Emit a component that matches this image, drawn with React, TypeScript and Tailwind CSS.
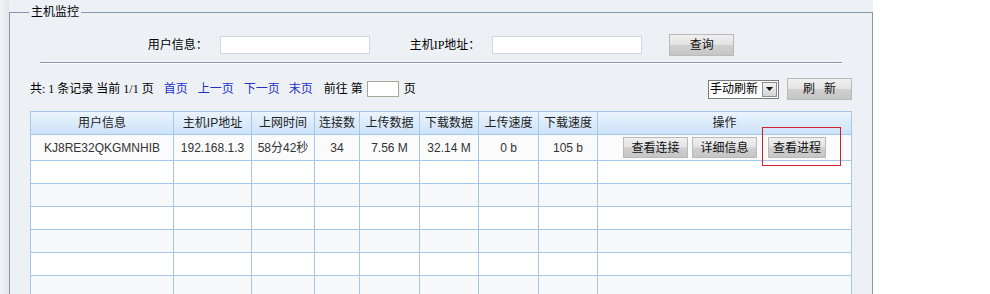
import React from 'react';

const serif = "font-['Liberation_Serif','Noto_Sans_CJK_SC',serif]";
const sans = "font-['Liberation_Sans','Noto_Sans_CJK_SC',sans-serif]";

const btn =
  'border border-[#b9b9b9] bg-[linear-gradient(#f0f0f0,#e3e3e3_48%,#cfcfcf_52%,#c6c6c6)] text-[12px] text-[#111] leading-none';

interface Row {
  user: string;
  ip: string;
  time: string;
  conn: string;
  up: string;
  down: string;
  upSpeed: string;
  downSpeed: string;
}

const rows: Row[] = [
  {
    user: 'KJ8RE32QKGMNHIB',
    ip: '192.168.1.3',
    time: '58分42秒',
    conn: '34',
    up: '7.56 M',
    down: '32.14 M',
    upSpeed: '0 b',
    downSpeed: '105 b',
  },
];

const widths = [143, 78, 63, 45, 60, 59, 60, 59];
const headers = ['用户信息', '主机IP地址', '上网时间', '连接数', '上传数据', '下载数据', '上传速度', '下载速度', '操作'];

const App: React.FC = () => {
  const empty = Array.from({ length: 7 });

  return (
    <div className="flex h-[294px] w-[990px] overflow-hidden bg-white">
      <div className="flex w-[873px] bg-[#edf1f5]">
        {/* left strip */}
        <div className="w-[9px] bg-[linear-gradient(to_right,#f3f4f5,#e9ecef_60%,#e3e7eb)]" />

        <fieldset className="mt-[4px] w-[864px] self-start border border-[#8797ab] px-[20px] pb-4">
          <legend className={`-ml-[1px] px-[2px] text-[12px] leading-[16px] text-black ${serif}`}>主机监控</legend>

          {/* search row */}
          <div className={`mt-[14px] flex h-[22px] items-center justify-center text-[12px] text-black ${serif}`}>
            <span>用户信息：</span>
            <input className="ml-[12px] h-[18px] w-[150px] border border-[#d3d9df] bg-white" />
            <span className="ml-[40px]">主机IP地址：</span>
            <input className="ml-[12px] h-[18px] w-[150px] border border-[#d3d9df] bg-white" />
            <button className={`ml-[27px] h-[22px] w-[65px] ${btn} ${sans}`}>查询</button>
          </div>

          <div className="mx-[10px] mt-[6px] border-t border-b border-t-[#8a9ab0] border-b-white" />

          {/* pager row */}
          <div className={`mt-[14px] flex h-[22px] items-center text-[12px] text-black ${serif}`}>
            <span>共: 1 条记录 当前 1/1 页</span>
            <a className="ml-[10px] text-[#1d32c4]">首页</a>
            <a className="ml-[10px] text-[#1d32c4]">上一页</a>
            <a className="ml-[10px] text-[#1d32c4]">下一页</a>
            <a className="ml-[9px] text-[#1d32c4]">末页</a>
            <span className="ml-[11px]">前往 第</span>
            <input className="ml-[4px] h-[16px] w-[32px] border border-[#aaa69b] bg-white" />
            <span className="ml-[5px]">页</span>

            <div className="ml-auto flex items-center">
              <div className={`flex h-[19px] w-[71px] items-center border border-[#7c7c7c] bg-white ${sans}`}>
                <span className="pl-[1px] text-[12px] leading-none">手动刷新</span>
                <span className="ml-auto mr-[1px] flex h-[15px] w-[15px] items-center justify-center border border-[#8d8d8d] bg-[linear-gradient(#f2f2f2,#d4d4d4)]">
                  <svg width="7" height="4" viewBox="0 0 7 4">
                    <path d="M0 0h7L3.5 4z" fill="#111" />
                  </svg>
                </span>
              </div>
              <button className={`ml-[8px] h-[22px] w-[65px] tracking-[9px] pl-[9px] ${btn} ${sans}`}>刷新</button>
            </div>
          </div>

          {/* table */}
          <table className={`mt-[11px] w-full table-fixed border-collapse text-[12px] ${sans}`}>
            <colgroup>
              {widths.map((w, i) => (
                <col key={i} style={{ width: w }} />
              ))}
              <col />
            </colgroup>
            <thead>
              <tr className="h-[23px] bg-[linear-gradient(#ebf4fd,#d9eafb_55%,#cae1f7)]">
                {headers.map((h) => (
                  <th key={h} className="border border-[#a6c6e6] p-0 text-center font-normal text-[#222]">
                    {h}
                  </th>
                ))}
              </tr>
            </thead>
            <tbody>
              {rows.map((r) => (
                <tr key={r.user} className="h-[26px] bg-[#fbfbfb] text-[#333]">
                  {[r.user, r.ip, r.time, r.conn, r.up, r.down, r.upSpeed, r.downSpeed].map((v, i) => (
                    <td key={i} className="border border-[#a6c6e6] p-0 text-center">
                      {v}
                    </td>
                  ))}
                  <td className="relative border border-[#a6c6e6] p-0">
                    <div className="flex items-center pl-[25px]">
                      <button className={`h-[21px] w-[65px] ${btn}`}>查看连接</button>
                      <button className={`ml-[4px] h-[21px] w-[65px] ${btn}`}>详细信息</button>
                      <button className={`ml-[11px] h-[21px] w-[58px] ${btn}`}>查看进程</button>
                    </div>
                    <div className="absolute left-[164px] top-[-8px] h-[39px] w-[79px] border border-[#d0202a]" />
                  </td>
                </tr>
              ))}
              {empty.map((_, i) => (
                <tr key={i} className={`h-[23px] ${i % 2 === 0 ? 'bg-white' : 'bg-[#f8f9fb]'}`}>
                  {headers.map((h) => (
                    <td key={h} className="border border-[#a6c6e6] p-0" />
                  ))}
                </tr>
              ))}
            </tbody>
          </table>
        </fieldset>
      </div>
    </div>
  );
};

export default App;
